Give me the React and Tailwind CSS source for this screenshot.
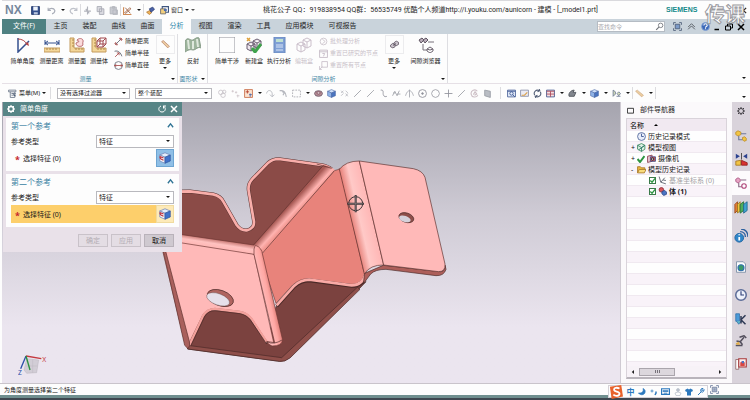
import React, { useState } from 'react';

const Icon = ({ className = 'size-[9px]', children }) => (
  <svg
    viewBox="0 0 16 16"
    className={`shrink-0 ${className}`}
    fill="none"
    stroke="currentColor"
    strokeWidth="1.5"
    aria-hidden="true"
  >
    {children}
  </svg>
);

const Caret = ({ className = 'text-neutral-900' }) => (
  <svg viewBox="0 0 8 4" className={`w-1 h-0.5 shrink-0 ${className}`} fill="currentColor" aria-hidden="true">
    <path d="M0 0h8L4 4z" />
  </svg>
);

const Divider = () => <span className="w-px h-3 bg-[#dcdcdf] shrink-0" />;

// small glyphs shared by the toolbars
const glyphs = {
  save: (
    <g>
      <path d="M1 1h14v14H1z" fill="#34508e" stroke="#233768" />
      <path d="M4 1h8v7H4z" fill="#eef3fb" stroke="none" />
      <path d="M5 11h7v4H5z" fill="#b9c6de" stroke="none" />
    </g>
  ),
  undo: <path d="M2 3v5h5M2 8c3-5 10-5 12 0 0 3-2 5-5 6" stroke="#a9adb8" strokeWidth="2" />,
  redo: <path d="M14 3v5H9M14 8C11 3 4 3 2 8c0 3 2 5 5 6" stroke="#bfc2ca" strokeWidth="2" />,
  cut: <path d="M8 1v14M2 9h12M5 5l6 8" stroke="#b0b2ba" strokeWidth="2" />,
  copy: <path d="M2 1h8v9H2zM6 5h8v10H6z" fill="#dcdce2" stroke="#a6a8b2" />,
  paste: <path d="M2 2h11v12H2zM6 1h4v3H6zM7 7h8v8H7z" fill="#c9cad1" stroke="#b3b5bd" />,
  sketch: (
    <g>
      <path d="M1 2v13h14" stroke="#d08a54" strokeWidth="2" />
      <path d="M3 12 12 3l2 2-9 8zM4 3l9 10" stroke="#9a5a3a" />
    </g>
  ),
  touch: (
    <g>
      <path d="M1 11l6-3 3 4-4 3z" fill="#f0b45a" stroke="#b67b35" />
      <path d="M6 5l6-3 3 4-6 5z" fill="#4b63a8" stroke="#2f4179" />
    </g>
  ),
  window: (
    <g>
      <path d="M4 1h11v10H4z" fill="#fff" stroke="#3f567f" strokeWidth="2" />
      <path d="M1 5h9v9H1z" fill="#f2cf7e" stroke="#6d6a6a" />
      <path d="M7 5h5v4H7z" fill="#4f6faf" stroke="none" />
    </g>
  ),
  menu: (
    <g>
      <path d="M1 2h13v3H1zM4 5v10h8V5M6 8h8M6 11h8" stroke="#6b7788" />
      <path d="M9 8l4 5" stroke="#3a4d6d" />
    </g>
  ),
  spheres: (
    <g stroke="#c9c4ca">
      <circle cx="5" cy="6" r="4" />
      <circle cx="11" cy="5" r="3" />
      <circle cx="9" cy="11" r="4" />
    </g>
  ),
  points: <path d="M1 4h4M3 2v4M7 6h4M9 4v4M10 12h5M12 10v5" stroke="#cfc6cb" />,
  snapOn: (
    <g>
      <path d="M1 1h14v14H1z" fill="#fbe3d0" stroke="#c96f4a" />
      <path d="M3 5h6M6 2v6" stroke="#b23c2a" />
      <path d="M9 10h5M11 8v6" stroke="#4563a8" />
    </g>
  ),
  arcDown: <path d="M1 8c1-7 9-7 10 0v5M7 10l4 4 4-4" stroke="#b3b5bc" />,
  sweep: <path d="M1 3c7-1 11 2 12 11M6 3l2 4M10 6l-3 5" stroke="#b3b5bc" strokeWidth="2" />,
  marquee: <path d="M1 2h14v12H1z" stroke="#a8a9b0" strokeDasharray="3 2" />,
  ring: (
    <g>
      <ellipse cx="8" cy="8" rx="7" ry="5" fill="#b78e96" stroke="#6e5a69" />
      <ellipse cx="8" cy="7" rx="3" ry="2" fill="#f0e3e6" stroke="#7a4a5a" />
    </g>
  ),
  cube: (
    <g stroke="#4c6aa5" strokeWidth="1">
      <path d="M1 4l7-3 7 3-7 3z" fill="#cfe0f8" />
      <path d="M1 4l7 3v8l-7-3z" fill="#8fb2e6" />
      <path d="M15 4L8 7v8l7-3z" fill="#4a74bf" />
    </g>
  ),
  cross4: <path d="M2 3l4 4M10 3l4 4M2 12l4-4M10 8l4 5M6 3L2 7M14 8l-4 5" stroke="#b9bac1" />,
  dashLine: <path d="M2 14L14 2" stroke="#9a9ca4" />,
  line: <path d="M2 14L11 5l3-3" stroke="#9a9ca4" />,
  curve: <path d="M3 2c7-1 3 6 5 9 1 3 4 3 6 2" stroke="#8f919a" />,
  zig: <path d="M1 12l4-8 4 8 4-9M2 7h4M9 9h6" stroke="#9fa1a9" />,
  peak: <path d="M8 1v14M1 12c2-7 5-9 7-9s5 2 7 9" stroke="#a3a5ad" />,
  target: (
    <g stroke="#8f919a">
      <circle cx="8" cy="8" r="7" />
      <circle cx="8" cy="8" r="1.5" fill="#8f919a" />
    </g>
  ),
  circle: <path d="M8 1l5 2 2 5-2 5-5 2-5-2-2-5 2-5z" stroke="#9b9da5" />,
  plus: <path d="M8 1v14M1 8h14" stroke="#8f919a" />,
  swirl: <path d="M13 4C9-1 1 3 2 9s9 7 12 2M6 10l3-5 3 4-4 2" stroke="#cdbfc6" strokeWidth="2" />,
  sheet: <path d="M3 2l10 2v11L3 12z" fill="#b9bdc4" stroke="#989ca5" />,
  zoomWin: (
    <g>
      <path d="M1 2h14v12H1z" fill="#e6eefb" stroke="#465e95" />
      <circle cx="8" cy="8" r="3" stroke="#34508e" />
      <path d="M10 10l4 4M1 4h14" stroke="#34508e" />
    </g>
  ),
  zoomDrag: (
    <g>
      <path d="M1 2h14v11H1z" fill="#ecebf3" stroke="#8a90aa" />
      <path d="M3 11h5l5-5" stroke="#d9a04a" strokeWidth="2" />
    </g>
  ),
  refresh: <path d="M3 11C0 5 6 0 11 3M13 5c3 6-3 11-8 8M8 5l4-2-1-3M8 11l-4 2 1 3" stroke="#56627a" strokeWidth="2" />,
  layout: (
    <g>
      <path d="M1 2h14v12H1z" fill="#f6dfe1" stroke="#40558e" />
      <path d="M1 4h14M8 4v10M1 9h14" stroke="#a8485a" />
    </g>
  ),
  orient: <path d="M2 13c-2-5 3-11 9-11L9 6h5l-3 7z" fill="#82868e" stroke="#4b4f57" />,
  flip: <path d="M2 2v11l4-4V5zM9 8l3-3 3 3-3 4zM8 13h7" fill="#d8e0b8" stroke="#6b7894" />,
  ruler: <path d="M1 4l3-2 11 9-3 3z" fill="#eccda0" stroke="#c7a077" strokeWidth="1" />,
};

const quickActions = ['undo', 'caret', 'redo', 'div', 'cut', 'copy', 'paste', 'div', 'sketch', 'caret', 'div', 'touch'];
const tabs = ['主页', '装配', '曲线', '曲面', '分析', '视图', '渲染', '工具', '应用模块', '可视报告'];
const snapTools = [
  'spheres', 'points', 'snapOn', 'caret', 'arcDown', 'sweep', 'marquee', 'caret', 'ring', 'cube', 'cross4', 'dashLine',
  'line', 'curve', 'zig', 'peak', 'target', 'circle', 'plus', 'dashLine', 'swirl', 'sheet',
];
const viewTools = ['zoomWin', 'zoomDrag', 'refresh', 'layout', 'caret', 'orient', 'caret', 'cube', 'caret', 'flip', 'caret', 'div', 'ruler', 'caret', 'div'];

const ToolRow = ({ items }) =>
  items.map((name, i) => {
    if (name === 'div') return <Divider key={i} />;
    if (name === 'caret')
      return (
        <button key={i} type="button" aria-label="更多选项" className="w-[9px] h-3 flex items-center justify-center">
          <Caret />
        </button>
      );
    return (
      <button key={i} type="button" aria-label={name} className="w-[13px] h-3 flex items-center justify-center">
        <Icon>{glyphs[name]}</Icon>
      </button>
    );
  });

const Select = ({ id, label, options, className }) => (
  <div className={`grid items-center ${className}`}>
    <select
      id={id}
      aria-label={label}
      className="col-start-1 row-start-1 w-full h-full appearance-none bg-white border border-[#b9b9be] pl-[2px] text-neutral-900 leading-none rounded-none"
    >
      {options.map(option => (
        <option key={option}>{option}</option>
      ))}
    </select>
    <span className="col-start-1 row-start-1 justify-self-end pr-[4px] flex pointer-events-none">
      <Caret />
    </span>
  </div>
);

const TitleBar = () => (
  <header className="h-[19px] flex items-center border-t border-[#d9d9dd] bg-[#fdfdfd]">
    <span className="w-[26px] pl-[3px] text-[12px] leading-none text-[#75879c] font-['Liberation_Sans',sans-serif] font-bold">NX</span>
    <button type="button" aria-label="保存" className="w-[15px] flex justify-center">
      <Icon>{glyphs.save}</Icon>
    </button>
    <div className="flex items-center pl-[2px]">
      <ToolRow items={quickActions} />
    </div>
    <button type="button" className="flex items-center gap-[2px] text-[6px] text-neutral-900 pl-[3px]">
      <Icon>{glyphs.window}</Icon>
      窗口
      <Caret />
      <Caret className="text-neutral-600" />
    </button>
    <h1 className="flex-1 text-center text-[7px] text-neutral-800 whitespace-nowrap font-['Roboto','Noto_Sans_CJK_SC',sans-serif]">
      桃花公子 QQ：919838954 QQ群：56535749 优酷个人频道http://i.youku.com/aunicorn - 建模 - [_model1.prt]
    </h1>
    <div className="relative w-[84px] flex items-center justify-between pr-[3px]">
      <span className="text-[7px] font-bold text-[#138a8a] font-['Liberation_Sans',sans-serif]">SIEMENS</span>
      <button type="button" aria-label="关闭" className="flex text-neutral-800">
        <Icon className="size-[7px]">
          <path d="M2 2l12 12M14 2L2 14" strokeWidth="3" />
        </Icon>
      </button>
      {/* channel watermark */}
      <span className="absolute z-10 right-[5px] -top-px text-[20px] leading-none font-bold text-white [-webkit-text-stroke:1px_#9b9ba1] font-['Noto_Sans_CJK_SC',sans-serif] pointer-events-none">
        传课
      </span>
    </div>
  </header>
);

const TabBar = ({ active, onSelect }) => (
  <nav className="h-[15px] flex items-stretch bg-[#c9d3db] text-[7px] text-neutral-800">
    <button type="button" className="w-11 bg-[#4f8182] text-white">文件(F)</button>
    {tabs.map(tab => (
      <button
        key={tab}
        type="button"
        onClick={() => onSelect(tab)}
        className={`${tab.length === 2 ? 'w-[29px]' : 'w-[43px]'} whitespace-nowrap ${
          tab === active ? 'bg-[#fdfdfd] text-[#2f88ab]' : ''
        }`}
      >
        {tab}
      </button>
    ))}
    <div className="ml-auto flex items-center pr-[4px]">
      <label className="w-[68px] h-[11px] flex items-center bg-white border border-[#b5bcc4] mr-[5px]">
        <input aria-label="查找命令" placeholder="查找命令" className="w-full min-w-0 text-[6px] leading-none outline-none placeholder:text-[#a9a9ae]" />
        <Icon>
          <circle cx="10" cy="6" r="4" stroke="#6f7379" />
          <path d="M7 9l-5 5" stroke="#6f7379" strokeWidth="2" />
        </Icon>
      </label>
      <button type="button" aria-label="全屏" className="w-[14px] flex justify-center text-[#4d5e78]">
        <Icon>
          <path d="M1 5V1h4M11 1h4v4M15 11v4h-4M5 15H1v-4" />
          <path d="M4 4h8v8H4z" fill="#7c9ac7" />
        </Icon>
      </button>
      <button type="button" aria-label="收起功能区" className="w-[15px] flex justify-center text-[#4c5158]">
        <Icon>
          <path d="M2 9l6-6 6 6M2 13l6-6 6 6" />
        </Icon>
      </button>
      <button type="button" aria-label="帮助" className="w-[13px] flex justify-center">
        <Icon>
          <circle cx="8" cy="8" r="7" fill="#3b68b8" stroke="#86a5d8" />
          <path d="M5 6c0-4 6-4 6 0 0 2-3 2-3 4M8 11v2" stroke="#fff" strokeWidth="2" />
        </Icon>
      </button>
      <button type="button" aria-label="最小化" className="w-[10px] flex justify-center text-black">
        <Icon className="size-[8px]">
          <path d="M3 13h9" strokeWidth="3" />
        </Icon>
      </button>
      <button type="button" aria-label="还原" className="w-[13px] flex justify-center text-black">
        <Icon className="size-[8px]">
          <path d="M5 6V2h10v8h-4M1 6h10v8H1z" strokeWidth="2" />
        </Icon>
      </button>
      <button type="button" aria-label="关闭部件" className="w-[11px] flex justify-center text-black">
        <Icon className="size-[8px]">
          <path d="M2 2l12 12M14 2L2 14" strokeWidth="3" />
        </Icon>
      </button>
    </div>
  </nav>
);

const RibbonButton = ({ label, width, caret, boxed, disabled, children }) => (
  <button
    type="button"
    disabled={disabled}
    className={`${width} shrink-0 flex flex-col items-center text-[6px] leading-[8px] whitespace-nowrap text-neutral-900 disabled:text-[#c8c0c8]`}
  >
    <span className={`w-[19px] h-[19px] flex items-center justify-center mb-[3px] ${boxed ? 'border border-[#ececee]' : ''}`}>
      <Icon className={boxed ? 'size-[9px]' : 'size-4'}>{children}</Icon>
    </span>
    {label}
    {caret && (
      <span className="pt-[2px] flex">
        <Caret />
      </span>
    )}
  </button>
);

const RibbonItem = ({ label, disabled, children }) => (
  <button
    type="button"
    disabled={disabled}
    className="h-3 flex items-center gap-[2px] text-[6px] leading-none whitespace-nowrap text-neutral-900 disabled:text-[#c8c0c8]"
  >
    <Icon>{children}</Icon>
    {label}
  </button>
);

const RibbonGroup = ({ title, className, children }) => (
  <section className={`shrink-0 flex flex-col justify-between pt-px border-r border-[#dedee2] ${className}`}>
    <div className="flex items-start">{children}</div>
    <footer className="h-[9px] flex items-center text-[6px] leading-none text-[#3f86a4]">
      <span className="flex-1 text-center">{title}</span>
      <span className="w-2 flex justify-center">
        <Caret />
      </span>
    </footer>
  </section>
);

const rulerL = (
  <g>
    <path d="M1 1h4v10h10v4H1z" fill="#f3d698" stroke="#c39a5c" strokeWidth="1" />
    <path d="M3 3h2M3 6h2M3 9h2M7 13v-2M10 13v-2M13 13v-2" stroke="#b0894c" strokeWidth="1" />
  </g>
);

const Ribbon = () => (
  <div className="h-[50px] flex bg-[#fdfdfd] border-b border-[#e6e0e6]">
    <RibbonGroup title="测量" className="w-[176px]">
      <RibbonButton label="简单角度" width="w-[35px] pl-[6px]">
        <path d="M3 1v14L14 4" stroke="#34508e" />
        <path d="M3 2c4 0 7 2 9 5" stroke="#b34645" strokeWidth="1" />
        <path d="M10 7l4 2-1-4z" fill="#b34645" stroke="none" />
      </RibbonButton>
      <RibbonButton label="测量距离" width="w-[29px]">
        <path d="M1 3v5M15 3v5M1 6h14M4 4L1 6l3 2M12 4l3 2-3 2" stroke="#34508e" strokeWidth="1" />
        <path d="M0 11h16v4H0z" fill="#f3d698" stroke="#c39a5c" strokeWidth="1" />
        <path d="M3 11v2M6 11v2M9 11v2M12 11v2" stroke="#b0894c" strokeWidth="1" />
      </RibbonButton>
      <RibbonButton label="测量面" width="w-[22px]">
        {rulerL}
        <path d="M8 3c3-3 7-1 6 2-1 1 1 3-1 4-3 1-6 0-6-3 2-1 3-1 3-2-1 0-2 0-2-1z" fill="#fbdcdc" stroke="#bc6f74" strokeWidth="1" />
      </RibbonButton>
      <RibbonButton label="测量体" width="w-[22px]">
        {rulerL}
        <path d="M6 4h6v6H6zM6 4l3-3h6v6l-3 3M12 4l3-3M9 1v6h6M6 10l3-3" stroke="#a1494f" strokeWidth="1" />
      </RibbonButton>
      <div className="pl-1 w-[46px] flex flex-col">
        <RibbonItem label="简单距离">
          <path d="M3 13L13 3" stroke="#5a5f6b" />
          <path d="M1 11l4 4M11 1l4 4M3 9v4h4M13 7V3H9" stroke="#a84b4b" />
        </RibbonItem>
        <RibbonItem label="简单半径">
          <path d="M1 4c7-2 11 3 13 9" stroke="#5a5f6b" />
          <path d="M2 14l7-7M5 7h4v4" stroke="#a84b4b" />
        </RibbonItem>
        <RibbonItem label="简单直径">
          <circle cx="8" cy="8" r="7" stroke="#6b6f7b" />
          <path d="M1 8h14M4 6L1 8l3 2M12 6l3 2-3 2" stroke="#a84b4b" />
        </RibbonItem>
      </div>
      <RibbonButton label="更多" width="w-[18px]" boxed caret>
        <path d="M1 3l3-2 11 10-3 3z" fill="#eccda0" stroke="#c08f7a" />
      </RibbonButton>
    </RibbonGroup>
    <RibbonGroup title="面形状" className="w-[30px]">
      <RibbonButton label="反射" width="w-[30px]">
        <path d="M0 4c3-5 5 0 8-1 3-2 4-3 6-2l2 10c-3-2-5 2-8 2-3-1-5 0-8 2z" fill="#9db49c" stroke="#8b9f8c" strokeWidth="1" />
        <path d="M3 3l1 9M8 4v8M12 2l1 8" stroke="#dfe8dd" strokeWidth="2" />
      </RibbonButton>
    </RibbonGroup>
    <RibbonGroup title="间隙分析" className="w-[240px]">
      <RibbonButton label="简单干涉" width="w-[34px] pl-1">
        <path d="M0 0h16v16H0z" stroke="#8f9098" strokeWidth="1" />
      </RibbonButton>
      <RibbonButton label="新建盒" width="w-[24px]">
        <path d="M1 7l4-2 4 2v5l-4 2-4-2zM1 7l4 2 4-2M5 9v5M7 4l4-2 4 2v5l-4 2-4-2zM7 4l4 2 4-2M11 6v5" fill="#efe7ef" stroke="#6b5f72" strokeWidth="1" />
        <path d="M6 11l3 4 6-8" stroke="#3fa24c" strokeWidth="3" />
        <path d="M1 1l3 3M4 1L1 4" stroke="#dfa13a" />
      </RibbonButton>
      <RibbonButton label="执行分析" width="w-[26px]">
        <path d="M3 0h11v16H3z" fill="#7f9fd5" stroke="#6a8ac0" strokeWidth="1" />
        <path d="M5 2h7v3H5z" fill="#bfe0d0" stroke="none" />
        <path d="M5 8h7M5 10h7M5 13h7" stroke="#dbe6f8" strokeWidth="1" />
      </RibbonButton>
      <RibbonButton label="编辑盒" width="w-[24px]" disabled>
        <path d="M1 7l4-2 4 2v6l-4 2-4-2zM1 7l4 2 4-2M5 9v6M7 3l4-2 4 2v6l-4 2-4-2zM7 3l4 2 4-2M11 5v6" stroke="#cbbfcb" strokeWidth="1" />
      </RibbonButton>
      <div className="pl-[3px] w-[68px] flex flex-col">
        <RibbonItem label="批处理分析" disabled>
          <circle cx="8" cy="8" r="6" stroke="#cbc2cb" />
          <path d="M6 4l5 4-5 4" stroke="#cbc2cb" />
        </RibbonItem>
        <RibbonItem label="重置已研究的节点" disabled>
          <path d="M1 2h14v13H1zM1 5h14M6 8h4l-2 5" stroke="#c2b8c4" />
        </RibbonItem>
        <RibbonItem label="重置所有节点" disabled>
          <path d="M5 1h10v10H5zM1 9v6h4M1 15l5-5" stroke="#c9bfca" />
        </RibbonItem>
      </div>
      <RibbonButton label="更多" width="w-[20px]" boxed caret>
        <path d="M1 9l4-3 4 2v4l-4 2-4-2zM7 5l4-3 4 2v4l-4 2-4-2zM5 10l6-4" fill="#d3ccd4" stroke="#5f5562" />
      </RibbonButton>
      <RibbonButton label="间隙浏览器" width="w-[43px]">
        <path d="M1 3l3-2 2 2-3 3zM5 3l3-2 2 2-3 3z" fill="#b9adb9" stroke="#5f5562" strokeWidth="1" />
        <path d="M5 7v6h4M10 5h6" stroke="#77717b" strokeWidth="1" />
        <path d="M9 12l3-2 3 2v2l-3 2-3-2zM9 12l3 1 3-1" stroke="#6f6672" strokeWidth="1" />
      </RibbonButton>
    </RibbonGroup>
    <div className="flex-1 flex items-end justify-end pr-[4px] pb-1">
      <Caret />
    </div>
  </div>
);

const SelectionBar = () => (
  <div className="h-[18px] flex items-center bg-[#fdfdfd] text-[6px] text-neutral-900">
    <button type="button" className="w-12 pl-[6px] flex items-center gap-[2px] whitespace-nowrap">
      <Icon>{glyphs.menu}</Icon>
      菜单(M)
      <Caret />
    </button>
    <Divider />
    <Select label="选择过滤器" options={['没有选择过滤器']} className="w-[73px] h-[11px] ml-[6px]" />
    <Select label="选择范围" options={['整个装配']} className="w-[77px] h-[11px] ml-[5px] mr-1" />
    <div className="flex items-center">
      <ToolRow items={snapTools} />
    </div>
    <div className="ml-1.5 flex items-center">
      <Divider />
      <span className="w-1" />
      <ToolRow items={viewTools} />
    </div>
    <span className="ml-auto pr-[4px] pt-2 flex">
      <Caret />
    </span>
  </div>
);

// sheet metal bracket shown in the graphics window
const Bracket = () => (
  <svg viewBox="0 0 900 690" className="absolute left-[148px] top-[38px] w-[300px] h-[230px]" fill="none" strokeLinejoin="round">
    <defs>
      <linearGradient id="bendTop" gradientUnits="userSpaceOnUse" x1="425" y1="190" x2="450" y2="213">
        <stop offset="0" stopColor="#a85a55" />
        <stop offset="0.6" stopColor="#ffb3b0" />
        <stop offset="1" stopColor="#f0938c" />
      </linearGradient>
      <linearGradient id="bendLeft" gradientUnits="userSpaceOnUse" x1="205" y1="296" x2="200" y2="328">
        <stop offset="0" stopColor="#b8645e" />
        <stop offset="0.5" stopColor="#ffc2c0" />
        <stop offset="1" stopColor="#ffb4b2" />
      </linearGradient>
      <linearGradient id="bendFront" gradientUnits="userSpaceOnUse" x1="335" y1="450" x2="368" y2="443">
        <stop offset="0" stopColor="#ffb9b8" />
        <stop offset="0.5" stopColor="#ffa8a4" />
        <stop offset="1" stopColor="#d8746d" />
      </linearGradient>
      <linearGradient id="bendRight" gradientUnits="userSpaceOnUse" x1="604" y1="238" x2="665" y2="224">
        <stop offset="0" stopColor="#e8837b" />
        <stop offset="0.4" stopColor="#ffc9c7" />
        <stop offset="1" stopColor="#ffb6b5" />
      </linearGradient>
    </defs>
    {/* back wall */}
    <path
      d="M60 158L120 152 190 161Q212 166 222 183L262 255Q272 272 290 273 313 268 314 245L295 152Q292 132 306 116L352 66Q366 53 386 54L515 72Q542 77 553 92L335 345 60 300Z"
      fill="#8b4b47"
    />
    <path
      d="M60 155L120 154 190 163Q212 168 220 185L260 255Q272 272 290 271 313 266 312 245L296 152Q293 132 308 116L355 68Q368 57 386 57L515 75Q535 79 545 88"
      stroke="#5c3432"
      strokeWidth="11"
    />
    <path
      d="M60 155L120 154 190 163Q212 168 220 185L260 255Q272 272 290 271 313 266 312 245L296 152Q293 132 308 116L355 68Q368 57 386 57L515 75Q535 79 545 88"
      stroke="#f9aeaa"
      strokeWidth="8"
    />
    {/* lower wall */}
    <path
      d="M378 500L435 438Q458 420 480 422L605 438 648 425 628 446 420 652Q405 666 388 664L113 627 110 610 160 525Q175 508 195 510L270 516Q290 520 300 535L350 610Z"
      fill="#7b423f"
      stroke="#3f2422"
      strokeWidth="2"
    />
    <path d="M113 616L395 653 622 442 630 448 420 654Q405 666 388 664L113 627Z" fill="#8f4f4a" stroke="#4a2927" strokeWidth="2" />
    {/* middle face */}
    <path d="M330 345L553 92Q562 90 570 86L640 388 645 402Q635 435 605 433L475 416Q450 416 428 435L378 490Z" fill="#e8837b" stroke="#6b3532" strokeWidth="2" />
    <path d="M380 498L433 439Q452 422 478 421L605 438Q640 438 648 402" stroke="#4a2927" strokeWidth="11" />
    <path d="M380 496L433 437Q452 420 478 419L605 436Q638 436 647 400" stroke="#f9aaa6" strokeWidth="8" />
    <path d="M310 316L520 76Q545 80 555 90L337 343Z" fill="url(#bendTop)" />
    <path d="M310 316L520 76M337 340L553 92M500 72L545 85" stroke="#5c2f2c" strokeWidth="2" />
    {/* front flange */}
    <path
      d="M30 300L97 298 312 342 372 612Q355 615 348 600L305 535Q292 518 270 514L195 505Q170 506 158 525L116 612 104 606Z"
      fill="#ffb9b8"
      stroke="#7c4340"
      strokeWidth="2"
    />
    <path d="M350 606L305 537Q292 520 270 516L195 507Q172 507 160 526L118 616" stroke="#f3a19c" strokeWidth="7" />
    <path d="M350 612L302 541Q290 525 270 521L195 512Q174 512 164 530L122 618" stroke="#4a2927" strokeWidth="2" />
    <path d="M37 322L44 322 118 604Q122 618 114 626L104 616Z" fill="#a9605c" stroke="#5c2f2c" strokeWidth="2" />
    <path d="M60 280L97 284 312 315Q335 320 335 342L312 343 97 309 60 303Z" fill="url(#bendLeft)" />
    <path d="M60 280L97 284 312 315M60 303L97 309 312 343 336 340" stroke="#6b3532" strokeWidth="2" />
    <path d="M312 343Q310 325 316 316 336 322 338 345L398 600Q396 618 366 618 354 614 350 604L374 608Z" fill="url(#bendFront)" stroke="#6b3532" strokeWidth="2" />
    <path d="M352 606Q372 615 396 600" stroke="#4a2927" strokeWidth="2" />
    {/* right flange */}
    <path d="M700 376L872 395Q887 392 885 375L888 388Q882 408 858 407L708 388Q676 388 662 402 650 418 640 432L644 400Z" fill="#ad5f5a" stroke="#4a2927" strokeWidth="2" />
    <path d="M568 88Q588 63 628 63L701 375Q660 374 643 402L638 380Z" fill="url(#bendRight)" stroke="#5c2f2c" strokeWidth="2" />
    <path d="M628 63L790 86Q818 92 825 112L885 372Q887 395 866 395L701 375Z" fill="#ffb9b8" stroke="#5c2f2c" strokeWidth="2" />
    {/* holes */}
    <g transform="rotate(20 211 474)">
      <ellipse cx="211" cy="474" rx="41" ry="23" fill="#b0645f" stroke="#4a2927" strokeWidth="2" />
      <ellipse cx="206" cy="480" rx="36" ry="17" fill="#e6e0ea" stroke="#4a2927" strokeWidth="1" />
    </g>
    <g transform="rotate(18 769 233)">
      <ellipse cx="769" cy="233" rx="23" ry="14" fill="#8f4f4a" stroke="#4a2927" strokeWidth="2" />
      <ellipse cx="766" cy="238" rx="18" ry="9" fill="#d5d1da" />
    </g>
    {/* selection cursor */}
    <g stroke="#3b3436">
      <circle cx="617" cy="191" r="21" strokeWidth="3" />
      <path d="M592 191h50M617 165v52" strokeWidth="6" />
      <path d="M594 191h46M617 167v48" stroke="#8d8084" strokeWidth="2" />
    </g>
  </svg>
);

const Axes = () => (
  <svg viewBox="0 0 90 66" className="absolute left-[16px] bottom-[7px] w-[30px] h-[22px]" fill="none">
    <path d="M26 14l36 4-6 38-30 2-8-10z" fill="#d2cdd6" stroke="#aaa5ae" />
    <path d="M44 16v40M24 36h34" stroke="#b5b0b9" />
    <path d="M24 6l46 8" stroke="#c4393f" strokeWidth="4" />
    <path d="M24 6L8 44" stroke="#2b4fa8" strokeWidth="4" />
    <path d="M24 6l12 42" stroke="#2d9140" strokeWidth="4" />
    <text x="73" y="23" fontSize="20" fill="#c4393f">X</text>
    <text x="0" y="62" fontSize="20" fill="#2b4fa8">Z</text>
  </svg>
);

const FaceIcon = () => (
  <Icon className="size-3">
    <path d="M1 4l7-3 7 3-7 3z" fill="#e3edfb" stroke="#7086b5" strokeWidth="1" />
    <path d="M1 4l7 3v8l-7-3z" fill="#f4f6fb" stroke="#7086b5" strokeWidth="1" />
    <path d="M15 4L8 7v8l7-3z" fill="#3f72cb" stroke="#3358a0" strokeWidth="1" />
    <path d="M1 6l5 2M2 9l4 2M1 6l1 3" stroke="#c0303a" strokeWidth="1.5" />
  </Icon>
);

const ReferenceSection = ({ id, title, current }) => (
  <section className="bg-[#fdfdfd] h-[53px] pl-[5px] pr-[5px]">
    <button type="button" className="w-full h-[15px] flex items-center justify-between text-[8px] leading-none text-[#3a82a3]">
      {title}
      <Icon className="size-[7px] text-[#2f7394]">
        <path d="M2 12l6-8 6 8" strokeWidth="3" />
      </Icon>
    </button>
    <div className="h-[16px] flex items-center justify-between text-[7px] leading-none text-neutral-900">
      <label htmlFor={id}>参考类型</label>
      <Select id={id} options={['特征']} className="w-[78px] h-[13px]" />
    </div>
    <div className="h-[18px] flex items-stretch text-[7px] leading-none text-neutral-900">
      <span className={`flex-1 flex items-center pl-1 gap-[3px] ${current ? 'bg-[#fdcf6b]' : ''}`}>
        <b className="text-[9px] leading-none pt-[2px] text-[#c4252b]">*</b>
        选择特征 (0)
      </span>
      <button
        type="button"
        aria-label="选择特征"
        className={`w-[18px] flex items-center justify-center border ${current ? 'bg-[#fdeab9] border-[#f0dba0]' : 'bg-[#8fbfe6] border-[#6da5d2]'}`}
      >
        <FaceIcon />
      </button>
    </div>
  </section>
);

const AngleDialog = () => (
  <div role="dialog" aria-label="简单角度" className="absolute left-px top-0 w-[179px] bg-[#e9e1e9] text-[7px]">
    <div className="h-[14px] flex items-center bg-[#578586] text-white px-[4px]">
      <Icon className="size-2">
        <circle cx="8" cy="8" r="5" strokeWidth="3" />
        <path d="M8 0v3M8 13v3M0 8h3M13 8h3M2 2l2 2M12 12l2 2M14 2l-2 2M4 12l-2 2" strokeWidth="2" />
      </Icon>
      <span className="flex-1 pl-[5px]">简单角度</span>
      <button type="button" aria-label="重置" className="px-[2px]">
        <Icon className="size-2">
          <path d="M6 2C-1 5 1 14 8 14s9-8 3-12M11 7V2h5" strokeWidth="2" />
        </Icon>
      </button>
      <button type="button" aria-label="关闭" className="pl-[2px]">
        <Icon className="size-2">
          <path d="M2 2l12 12M14 2L2 14" strokeWidth="3" />
        </Icon>
      </button>
    </div>
    <div className="flex flex-col gap-[3px] px-[3px] pt-[2px]">
      <ReferenceSection id="ref1" title="第一个参考" />
      <ReferenceSection id="ref2" title="第二个参考" current />
    </div>
    <div className="flex justify-end gap-[3px] px-2 pt-[7px] pb-[5px]">
      <button type="button" disabled className="w-[30px] h-[13px] leading-none border border-[#c9c2c9] bg-[#e4dde4] text-[#b3acb3]">确定</button>
      <button type="button" disabled className="w-[30px] h-[13px] leading-none border border-[#c9c2c9] bg-[#e4dde4] text-[#b3acb3]">应用</button>
      <button type="button" className="w-[30px] h-[13px] leading-none border border-[#b9b2ba] bg-[#cfc9d0] text-neutral-900">取消</button>
    </div>
  </div>
);

const TreeCheck = ({ label }) => (
  <span className="grid shrink-0">
    <input type="checkbox" defaultChecked aria-label={label} className="col-start-1 row-start-1 appearance-none size-[7px] bg-white border border-[#3c7a4a]" />
    <Icon className="col-start-1 row-start-1 size-[7px] text-[#2c9440] pointer-events-none">
      <path d="M3 8l4 4 7-9" strokeWidth="3" />
    </Icon>
  </span>
);

const NavigatorTree = () => (
  <ul className="flex-1 text-[7px] leading-none text-neutral-900 bg-[repeating-linear-gradient(#fefefe_0_10px,#f0e9f0_10px_11px,#f9f3f9_11px_21px,#f0e9f0_21px_22px)] [&>li]:h-[11px] [&>li]:flex [&>li]:items-center [&>li]:gap-[2px] [&>li]:whitespace-nowrap">
    <li className="pl-[10px]">
      <Icon>
        <circle cx="8" cy="8" r="7" fill="#e9eefa" stroke="#50659a" />
        <path d="M8 3v5h4" stroke="#34508e" />
      </Icon>
      历史记录模式
    </li>
    <li className="pl-[4px]">
      <span className="w-1">+</span>
      <Icon>
        <path d="M1 4l7-3 6 3v7l-6 4-7-4z" fill="#dff0e4" stroke="#3a8c5c" />
        <path d="M1 4l7 4 6-4M8 8v7M3 12l10-7" stroke="#2f7a68" />
      </Icon>
      模型视图
    </li>
    <li className="pl-[4px]">
      <span className="w-1">+</span>
      <Icon className="size-2">
        <path d="M1 8l5 6 9-12" stroke="#2c9440" strokeWidth="4" />
      </Icon>
      <Icon>
        <path d="M1 4l8-2v11l-8 2z" fill="#e9c8d2" stroke="#8a3a50" />
        <path d="M6 5h9v8H6z" fill="#c65a5f" stroke="#3f4c85" />
        <circle cx="10" cy="9" r="2" fill="#fff" />
      </Icon>
      摄像机
    </li>
    <li className="pl-[4px]">
      <span className="w-1">-</span>
      <Icon>
        <path d="M1 14V3h5l2 2h6v3" fill="#e9b63f" stroke="#a8782a" />
        <path d="M1 14l3-6h12l-3 6z" fill="#f9dc7c" stroke="#a8782a" />
      </Icon>
      模型历史记录
    </li>
    <li className="pl-[22px] text-[#a3a0a5]">
      <TreeCheck label="基准坐标系" />
      <Icon>
        <path d="M2 1l3 10 9 3M5 11l7-8M9 7l5 1" stroke="#555b68" />
      </Icon>
      基准坐标系 (0)
    </li>
    <li className="pl-[22px] font-bold">
      <TreeCheck label="体" />
      <Icon>
        <circle cx="6" cy="5" r="4" fill="#d9555c" stroke="#8d2d38" />
        <path d="M7 8l5-2 3 3v4l-5 2-3-3z" fill="#4b74c4" stroke="#2f4a88" />
      </Icon>
      体 (1)
    </li>
  </ul>
);

const PartNavigator = () => (
  <aside className="w-[112px] shrink-0 flex flex-col bg-[#fbf9fb] border-l border-[#cfcad2] px-[5px] pb-1">
    <div className="h-4 flex items-center gap-[6px] pl-px text-[7px] text-neutral-800">
      <Icon className="size-[7px]">
        <path d="M1 3h14v11H1z" strokeWidth="2" />
      </Icon>
      部件导航器
    </div>
    <div className="flex-1 flex flex-col border border-[#d9d3da] border-b-2 border-b-[#b9b4bb]">
      <div className="h-3 shrink-0 flex items-center gap-[10px] pl-[3px] text-[7px] leading-none bg-[#f1e9f1]">
        名称
        <Caret className="rotate-180" />
      </div>
      <NavigatorTree />
      <div className="h-[11px] flex items-center gap-[4px] px-1 bg-[#f7f2f7]">
        <Icon className="size-1">
          <path d="M12 0v16L3 8z" fill="#222" stroke="none" />
        </Icon>
        <span className="w-9 h-2 flex items-center justify-center gap-px border border-[#aaa5ac] bg-[#dcd7dd]">
          <i className="w-px h-[3px] bg-[#77727a]" />
          <i className="w-px h-[3px] bg-[#77727a]" />
          <i className="w-px h-[3px] bg-[#77727a]" />
        </span>
        <Icon className="size-1 ml-auto">
          <path d="M4 0v16l9-8z" fill="#222" stroke="none" />
        </Icon>
      </div>
    </div>
  </aside>
);

const ResourceBar = () => (
  <nav className="w-[18px] shrink-0 flex flex-col bg-[#d9d3db] [&>button]:flex [&>button]:items-center [&>button]:justify-center">
    <button type="button" aria-label="设置" className="h-[18px] text-[#3f3c42]">
      <Icon className="size-2">
        <circle cx="8" cy="8" r="5" strokeWidth="2" />
        <path d="M8 0v3M8 13v3M0 8h3M13 8h3M2 2l2 2M12 12l2 2M14 2l-2 2M4 12l-2 2" strokeWidth="2" />
      </Icon>
    </button>
    <button type="button" aria-label="装配导航器" className="h-7 pt-1">
      <Icon className="size-3">
        <path d="M1 3l3-2 4 2v3L4 8 1 6zM10 10l3-1 2 2v3l-3 1-2-2z" fill="#f2c443" stroke="#b98a22" strokeWidth="1" />
        <path d="M8 5h7M5 8v5h5" stroke="#6f7a9a" />
      </Icon>
    </button>
    <button type="button" aria-label="约束导航器" className="h-[23px]">
      <Icon className="size-[13px]">
        <path d="M1 1v6l5-3zM15 1v6l-5-3z" fill="#2b4290" stroke="none" />
        <path d="M1 15v-5l6-1v6z" fill="#f2c443" stroke="#a2721c" strokeWidth="1" />
        <path d="M8 15V9l7 3v3z" fill="#d8322f" stroke="#8f1d1d" strokeWidth="1" />
        <path d="M8 0v8" stroke="#333" strokeWidth="1" />
      </Icon>
    </button>
    <button type="button" aria-label="部件导航器" className="h-6 bg-[#fdfbfd]">
      <Icon className="size-3">
        <path d="M1 3l3-2 3 2v3L4 8 1 6z" fill="#e7a3c4" stroke="#a04a78" strokeWidth="1" />
        <path d="M8 4h7M5 8v5h4" stroke="#8a6a86" />
        <circle cx="12" cy="12" r="3" stroke="#b0487a" />
      </Icon>
    </button>
    <button type="button" aria-label="重用库" className="h-[23px]">
      <Icon className="size-[14px]">
        <path d="M1 5l3-3v10l-3 3z" fill="#e27b34" stroke="#9a4b1c" strokeWidth="1" />
        <path d="M4 5l3-3v10l-3 3z" fill="#efc53e" stroke="#9e7a1f" strokeWidth="1" />
        <path d="M7 5l4-3v10l-4 3z" fill="#4fae5c" stroke="#2a6e38" strokeWidth="1" />
        <path d="M11 5l4-3v10l-4 3z" fill="#3fa3cf" stroke="#236a90" strokeWidth="1" />
      </Icon>
    </button>
    <button type="button" aria-label="HD3D 工具" className="h-9">
      <Icon className="size-[14px]">
        <circle cx="6" cy="10" r="5" fill="#2f86c9" stroke="#1f64a0" strokeWidth="1" />
        <path d="M6 9v4M6 6v1" stroke="#fff" strokeWidth="2" />
        <path d="M7 3c4 0 6 3 6 6M8 0c5 0 8 4 8 9" stroke="#2b5f9e" />
      </Icon>
    </button>
    <button type="button" aria-label="Web 浏览器" className="h-[26px]">
      <Icon className="size-3">
        <path d="M2 1h9l3 3v11H2z" fill="#fdfdfd" stroke="#6a7f9a" strokeWidth="1" />
        <circle cx="8" cy="9" r="4" fill="#3c9a6a" stroke="#2f6fae" />
      </Icon>
    </button>
    <button type="button" aria-label="历史记录" className="h-[30px]">
      <Icon className="size-3">
        <circle cx="8" cy="8" r="7" fill="#eef2fb" stroke="#5b6c98" strokeWidth="2" />
        <path d="M8 3v5h4" stroke="#2c3f78" />
      </Icon>
    </button>
    <button type="button" aria-label="系统材料" className="h-[18px]">
      <Icon className="size-3">
        <path d="M1 1h5v10H1z" fill="#4b9bd8" stroke="#2d6da8" strokeWidth="1" />
        <path d="M2 11l3 4 3-4" fill="#58b8c8" stroke="#2d6da8" strokeWidth="1" />
        <path d="M14 3L8 9l6 6M8 4v10" stroke="#2e3a55" strokeWidth="2" />
      </Icon>
    </button>
    <button type="button" aria-label="加工向导" className="h-[25px]">
      <Icon className="size-3">
        <path d="M6 3l6-2 3 3M12 3l-5 6M2 8l5 1 3 4M1 14h9" stroke="#54505e" strokeWidth="2" />
        <path d="M1 11l4-2 2 4H2z" fill="#e0ad4c" stroke="none" />
      </Icon>
    </button>
    <button type="button" aria-label="角色" className="h-[22px]">
      <Icon className="size-3">
        <path d="M1 2h4v13H1z" fill="#fdfdfd" stroke="#8a5a5a" strokeWidth="1" />
        <path d="M5 1h10v11H5z" fill="#fdf0ee" stroke="#a8383a" />
        <path d="M7 11V6l3-2 3 2v5" fill="#d94640" stroke="none" />
        <path d="M9 4h3v3H9z" fill="#4b74c4" stroke="none" />
      </Icon>
    </button>
  </nav>
);

const ImeBar = () => (
  <div className="absolute right-[42px] bottom-[2px] h-[13px] w-[100px] flex items-center justify-between pr-[2px] bg-[#fdfdfd] border border-[#d5d2d8] text-[#2c78bd]">
    <Icon className="size-[14px]">
      <path d="M1 2l13-2 2 13-13 3z" fill="#e9622b" stroke="none" />
      <path d="M12 4C8 2 5 4 6 6s6 1 6 4-5 3-7 1" stroke="#fff" strokeWidth="2" />
    </Icon>
    <span className="text-[8px] leading-none font-bold">中</span>
    <Icon className="size-2">
      <path d="M10 1c2 6-2 10-9 9 4 6 15 4 13-5-1-2-2-3-4-4z" fill="currentColor" />
    </Icon>
    <Icon className="size-2">
      <circle cx="4" cy="6" r="2" />
      <path d="M12 7v3l-2 4" strokeWidth="3" />
    </Icon>
    <Icon>
      <path d="M1 3h14v10H1z" strokeWidth="2" />
      <path d="M3 6h10M3 8h10M5 11h6" />
    </Icon>
    <Icon className="size-2 text-[#b9c0cc]">
      <circle cx="8" cy="4" r="3" fill="currentColor" />
      <path d="M2 10l6-2 6 2-2 5H4z" />
    </Icon>
    <Icon className="size-2">
      <path d="M5 1L0 4l2 4 2-1v8h8V7l2 1 2-4-5-3-3 2z" fill="currentColor" stroke="none" />
    </Icon>
    <Icon className="size-2">
      <path d="M2 14L9 7M14 3l-3 3-2-2 3-3C8 0 6 4 8 7s6 1 6-4z" strokeWidth="2" />
    </Icon>
  </div>
);

const App = () => {
  const [activeTab, setActiveTab] = useState('分析');

  return (
    <div className="relative min-h-screen flex flex-col bg-[#fdfdfd] font-['Noto_Sans','Noto_Sans_CJK_SC',sans-serif]">
      <div className="flex-1 flex flex-col pl-[2px]">
        <TitleBar />
        <TabBar active={activeTab} onSelect={setActiveTab} />
        <Ribbon />
        <SelectionBar />

        {/* Work area */}
        <main className="flex-1 min-h-[281px] flex">
          <div className="flex-1 relative overflow-hidden bg-linear-to-b from-[#a5a4ae] via-[#cfcbd5] via-40% to-[#ebe5ef] to-80%">
            <Bracket />
            <Axes />
            <AngleDialog />
          </div>
          <PartNavigator />
          <ResourceBar />
        </main>
      </div>

      <footer className="h-3 flex items-center justify-between pl-1 pr-[31px] border-t border-[#c9c4cb] text-[6px] leading-none text-neutral-900">
        为角度测量选择第二个特征
        <Icon className="size-[9px] text-[#6d7d9c]">
          <path d="M1 5V1h4M11 1h4v4M15 11v4h-4M5 15H1v-4" />
          <path d="M4 4h8v8H4zM6 7h4M6 9h4" fill="#c4cede" />
        </Icon>
      </footer>
      <div className="h-[5px] bg-[#3f4750] border-t-[3px] border-[#6f8f8f]" />
      <ImeBar />
    </div>
  );
};

export default App;
